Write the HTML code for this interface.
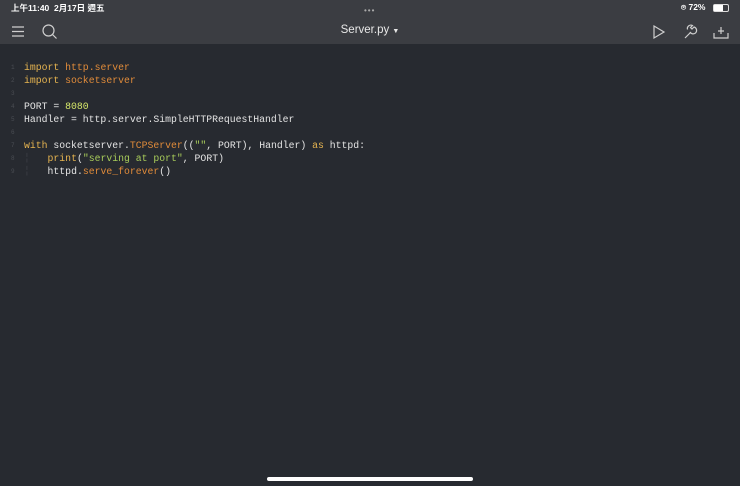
<!DOCTYPE html>
<html><head><meta charset="utf-8"><style>
body{margin:0;width:740px;height:486px;background:#272a30;overflow:hidden;font-family:"Liberation Sans","Noto Sans CJK TC",sans-serif;position:relative}
.top{position:absolute;left:0;top:0;width:740px;height:44px;background:#3b3d42}
.st{position:absolute;top:2px;font-size:8.5px;color:#fff;font-weight:bold}
.title{position:absolute;top:24px;left:0;width:740px;text-align:center;color:#e8e8e8;font-size:11.5px}
.code{position:absolute;left:0;top:61px;font-family:"Liberation Mono",monospace;font-size:9.8px;color:#e4e4e4}
.code div{height:13px;line-height:13px;position:relative;padding-left:24px;white-space:pre}
.ln{position:absolute;left:11px;top:0;color:#4a4d53;font-size:6px;line-height:14px}
.k{color:#e6b450}.o{color:#e08b3a}.n{color:#d6e86a}.s{color:#a8cc5a}.g{color:#3e4147}
</style></head><body>
<div class="top">
<div class="st" style="left:11px">上午11:40&nbsp;&nbsp;2月17日 週五</div>
<div style="position:absolute;left:364px;top:6px;color:#aaa;font-size:8px;letter-spacing:1px">•••</div>
<div class="st" style="left:681px">⌾ 72%</div>
<div style="position:absolute;left:713px;top:4px;width:14px;height:6px;border:1px solid #ddd;border-radius:2px"><div style="width:9px;height:6px;background:#fff"></div></div>
<div class="title">Server.py <span style="font-size:7px">▼</span></div>
<svg style="position:absolute;left:0;top:22px" width="740" height="20" fill="none" stroke="#cfcfcf" stroke-width="1.2">
<path d="M12 5h12M12 9.5h12M12 14h12"/>
<circle cx="48.5" cy="8.5" r="5.5"/><path d="M52.5 12.5l4 4"/>
<path d="M654 4l10 6-10 6z"/>
<path d="M685 16l6-6M690 10a3.5 3.5 0 1 0 4-5l-2 2-1.5-1.5 2-2a3.5 3.5 0 0 0-5 4"/>
<path d="M714 11v5h14v-5M721 5v7M718 9h6"/>
</svg>
</div>
<div class="code"><div><span class="ln">1</span><span class="k">import</span> <span class="o">http.server</span></div><div><span class="ln">2</span><span class="k">import</span> <span class="o">socketserver</span></div><div><span class="ln">3</span></div><div><span class="ln">4</span>PORT = <span class="n">8080</span></div><div><span class="ln">5</span>Handler = http.server.SimpleHTTPRequestHandler</div><div><span class="ln">6</span></div><div><span class="ln">7</span><span class="k">with</span> socketserver.<span class="o">TCPServer</span>((<span class="s">""</span>, PORT), Handler) <span class="k">as</span> httpd:</div><div><span class="ln">8</span><span class="g">╎   </span><span class="k">print</span>(<span class="s">"serving at port"</span>, PORT)</div><div><span class="ln">9</span><span class="g">╎   </span>httpd.<span class="o">serve_forever</span>()</div></div>
<div style="position:absolute;left:267px;top:477px;width:206px;height:4px;border-radius:2px;background:#fff"></div>
</body></html>
